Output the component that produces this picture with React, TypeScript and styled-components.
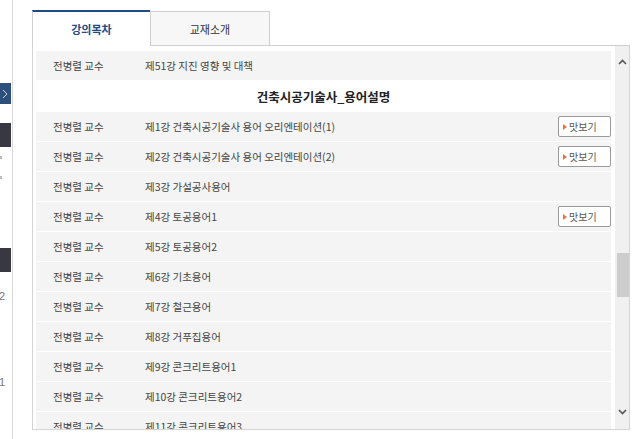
import React from "react";
import styled, { createGlobalStyle } from "styled-components";

const GlobalStyle = createGlobalStyle`
  html, body { margin: 0; padding: 0; background: #fff; }
  body {
    font-family: "Noto Sans CJK KR", "Noto Sans", sans-serif;
    color: #444;
    overflow: hidden;
  }
`;

const Page = styled.div`
  display: flex;
  width: 635px;
  height: 439px;
  overflow: hidden;
`;

const Sidebar = styled.div`
  width: 12px;
  flex: none;
  border-right: 1px solid #d8d8d8;
  display: flex;
  flex-direction: column;
  overflow: hidden;
`;

const SideBlock = styled.div<{ $top: number; $h: number; $color: string }>`
  margin-top: ${(p) => p.$top}px;
  height: ${(p) => p.$h}px;
  width: 11px;
  background: ${(p) => p.$color};
  display: flex;
  align-items: center;
`;

const SideText = styled.div<{ $top: number }>`
  margin-top: ${(p) => p.$top}px;
  font-family: "Liberation Sans", sans-serif;
  font-size: 11px;
  line-height: 11px;
  height: 11px;
  color: #777;
  margin-left: -1px;
`;

const SideDot = styled.div<{ $top: number }>`
  margin-top: ${(p) => p.$top}px;
  width: 2px;
  height: 3px;
  background: #bbb;
`;

const Main = styled.div`
  margin-left: 19px;
  margin-top: 10px;
  width: 598px;
  display: flex;
  flex-direction: column;
`;

const Tabs = styled.div`
  display: flex;
  height: 36px;
`;

const ActiveTab = styled.div`
  width: 117px;
  height: 34px;
  border-top: 2px solid #1f4c86;
  border-left: 1px solid #cfcfcf;
  background: #fff;
  display: flex;
  align-items: center;
  justify-content: center;
  font-size: 11px;
  font-weight: 700;
  color: #1f4c86;
`;

const Tab = styled.div`
  margin-top: 1px;
  width: 118px;
  height: 33px;
  border: 1px solid #cfcfcf;
  background: #f7f7f7;
  display: flex;
  align-items: center;
  justify-content: center;
  font-size: 11px;
  color: #333;
`;

const TabFill = styled.div`
  flex: 1;
  border-bottom: 1px solid #cfcfcf;
`;

const Panel = styled.div`
  height: 383px;
  border-left: 1px solid #d4d4d4;
  border-right: 1px solid #d4d4d4;
  border-bottom: 1px solid #d4d4d4;
  display: flex;
`;

const List = styled.div`
  flex: 1;
  overflow: hidden;
  padding: 5px 4px 0 3px;
`;

const Row = styled.div`
  display: flex;
  align-items: center;
  height: 29px;
  background: #f4f4f4;
  border-bottom: 1px solid #fff;
  font-size: 10.5px;
  line-height: 14px;
  color: #444;
  white-space: nowrap;
`;

const GroupTitle = styled.div`
  height: 31px;
  display: flex;
  align-items: center;
  justify-content: center;
  font-size: 12.5px;
  font-weight: 700;
  color: #222;
`;

const Teacher = styled.div`
  width: 92px;
  padding-left: 17px;
  flex: none;
`;

const Title = styled.div`
  flex: 1;
`;

const PreviewButton = styled.button`
  width: 53px;
  height: 21px;
  margin-right: 0;
  border: 1px solid #9a9a9a;
  border-radius: 2px;
  background: #fff;
  display: flex;
  align-items: center;
  padding: 0 0 0 4px;
  gap: 2px;
  font-family: inherit;
  font-size: 10px;
  color: #555;
  cursor: pointer;
`;

const Tri = styled.span`
  width: 0;
  height: 0;
  border-top: 3px solid transparent;
  border-bottom: 3px solid transparent;
  border-left: 4px solid #e5743f;
`;

const Scrollbar = styled.div`
  width: 14px;
  flex: none;
  background: #f0f0f0;
  display: flex;
  flex-direction: column;
`;

const ArrowBox = styled.div<{ $h: number }>`
  height: ${(p) => p.$h}px;
  display: flex;
  align-items: center;
  justify-content: center;
  flex: none;
`;

const Track = styled.div`
  flex: 1;
  display: flex;
  flex-direction: column;
  align-items: flex-end;
`;

const Thumb = styled.div<{ $offset: number }>`
  margin-top: ${(p) => p.$offset}px;
  width: 12px;
  height: 44px;
  background: #cdcdcd;
`;

type Lecture = { no: number; title: string; preview?: boolean };

const lectures: Lecture[] = [
  { no: 1, title: "건축시공기술사 용어 오리엔테이션(1)", preview: true },
  { no: 2, title: "건축시공기술사 용어 오리엔테이션(2)", preview: true },
  { no: 3, title: "가설공사용어" },
  { no: 4, title: "토공용어1", preview: true },
  { no: 5, title: "토공용어2" },
  { no: 6, title: "기초용어" },
  { no: 7, title: "철근용어" },
  { no: 8, title: "거푸집용어" },
  { no: 9, title: "콘크리트용어1" },
  { no: 10, title: "콘크리트용어2" },
  { no: 11, title: "콘크리트용어3" },
];

const Chevron = ({ dir }: { dir: "up" | "down" }) => (
  <svg width="9" height="6" viewBox="0 0 9 6">
    <polyline
      points={dir === "up" ? "1,5 4.5,1.5 8,5" : "1,1 4.5,4.5 8,1"}
      fill="none"
      stroke="#555"
      strokeWidth="1.6"
    />
  </svg>
);

export default function App() {
  return (
    <>
      <GlobalStyle />
      <Page>
        <Sidebar>
          <SideBlock $top={83} $h={21} $color="#2d4f7c">
            <svg width="9" height="12" viewBox="0 0 9 12">
              <polyline points="3,2 7,6 3,10" fill="none" stroke="#c8d4e4" strokeWidth="1" />
            </svg>
          </SideBlock>
          <SideBlock $top={19} $h={24} $color="#383843" />
          <SideDot $top={9} />
          <SideDot $top={17} />
          <SideBlock $top={69} $h={24} $color="#383843" />
          <SideText $top={19}>2</SideText>
          <SideText $top={75}>1</SideText>
        </Sidebar>
        <Main>
          <Tabs>
            <ActiveTab>강의목차</ActiveTab>
            <Tab>교재소개</Tab>
            <TabFill />
          </Tabs>
          <Panel>
            <List>
              <Row>
                <Teacher>전병렬 교수</Teacher>
                <Title>제51강 지진 영향 및 대책</Title>
              </Row>
              <GroupTitle>건축시공기술사_용어설명</GroupTitle>
              {lectures.map((l) => (
                <Row key={l.no}>
                  <Teacher>전병렬 교수</Teacher>
                  <Title>{`제${l.no}강 ${l.title}`}</Title>
                  {l.preview && (
                    <PreviewButton>
                      <Tri />
                      맛보기
                    </PreviewButton>
                  )}
                </Row>
              ))}
            </List>
            <Scrollbar>
              <ArrowBox $h={32}>
                <Chevron dir="up" />
              </ArrowBox>
              <Track>
                <Thumb $offset={175} />
              </Track>
              <ArrowBox $h={34}>
                <Chevron dir="down" />
              </ArrowBox>
            </Scrollbar>
          </Panel>
        </Main>
      </Page>
    </>
  );
}
